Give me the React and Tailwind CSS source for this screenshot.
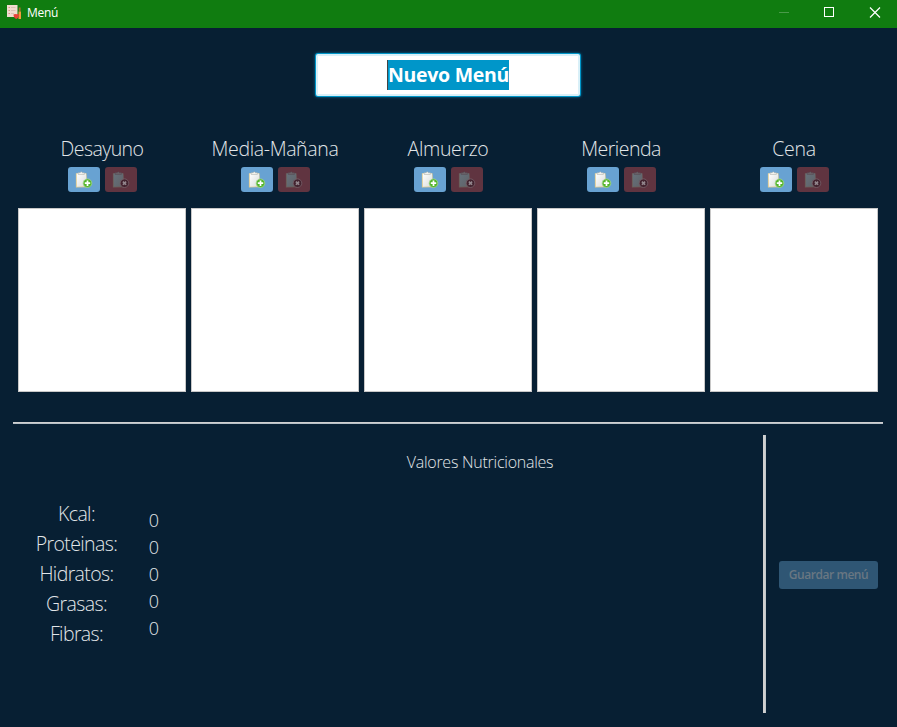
const meals = [
  { name: "Desayuno", tracking: "tracking-[-0.55px]" },
  { name: "Media-Mañana", tracking: "tracking-[-0.35px]" },
  { name: "Almuerzo", tracking: "tracking-[-0.35px]" },
  { name: "Merienda", tracking: "tracking-[-0.5px]" },
  { name: "Cena", tracking: "tracking-[-0.35px]" },
];

const nutrients = ["Kcal:", "Proteinas:", "Hidratos:", "Grasas:", "Fibras:"];

function AppIcon() {
  return (
    <svg width="16" height="16" viewBox="0 0 16 16" aria-hidden="true">
      <path d="M1 0h10.500v12H1z" fill="#f1ddd0" />
      <path d="M2.5 2.500h1.5M2.5 5.500h1.5M2.5 8.500h1.5" stroke="#e0998c" strokeWidth="1.2" />
      <path d="M5 2.500h4.5M5 5.500h4.5M5 8.500h3" stroke="#dcc3b6" />
      <path d="M12.800 2.500h1.800v4h-1.800z" fill="#a8702f" />
      <path d="M12.500 6.500h2.500V14h-2.500z" fill="#f39a3d" />
      <path d="M7.500 9.500q1.500-.8 2.700-.2 1.300-.6 2.800.2 0 3.300-2.800 4.500-2.700-1.200-2.700-4.500z" fill="#e8433a" />
    </svg>
  );
}

function ClipboardIcon({ kind }) {
  const add = kind === "add";
  return (
    <svg width="18" height="18" viewBox="0 0 18 18" aria-hidden="true">
      <defs>
        <linearGradient id={"paper-" + kind} x1="0" y1="0" x2="1" y2="1">
          <stop offset="0" stopColor={add ? "#fff" : "#66717a"} />
          <stop offset="1" stopColor={add ? "#d9dcda" : "#5f6268"} />
        </linearGradient>
      </defs>
      <path d="M.9 2.200h10.600l.5 14-11.100.2z" fill={add ? "#e0cc92" : "#6b5d58"} />
      <path d="M1.700 2.500h9.300l.5 12.800-9.600.4z" fill={"url(#paper-" + kind + ")"} />
      <path d="M3.200 3.500V1.700h1.900Q6.200-.3 7.400 1.700h1.900v1.800z" fill={add ? "#f4f3ee" : "#696167"} stroke={add ? "#a9aaa5" : "#544b55"} strokeWidth=".5" />
      <circle cx="12.500" cy="12.200" r="4.300" fill={add ? "#54b52c" : "#42232f"} stroke={add ? "#a1d58b" : "#79616a"} strokeWidth=".8" />
      {add ? (
        <path d="M12.500 9.500v5.400M9.800 12.200h5.400" stroke="#fff" strokeWidth="1.700" />
      ) : (
        <path d="M10.900 10.600l3.200 3.200M14.100 10.600l-3.200 3.200" stroke="#93868d" strokeWidth="1.600" />
      )}
    </svg>
  );
}

function Meal({ name, tracking }) {
  return (
    <section className="flex w-[168px] flex-col items-center">
      <h2 className={"h-[30px] whitespace-nowrap text-[19.5px] leading-[30px] font-light " + tracking}>{name}</h2>
      <div className="mt-[3px] flex gap-[5px] pl-px">
        <button aria-label="Añadir" className="flex h-[25px] w-8 items-center justify-center rounded-[3px] bg-[#68a2d2]">
          <ClipboardIcon kind="add" />
        </button>
        <button aria-label="Eliminar" disabled className="flex h-[25px] w-8 items-center justify-center rounded-[3px] bg-[#603440]">
          <ClipboardIcon kind="remove" />
        </button>
      </div>
      <div className="mt-4 h-[184px] w-full border border-[#c8c8c8] bg-white" />
    </section>
  );
}

export default function App() {
  return (
    <div className="flex h-[727px] w-[897px] flex-col overflow-hidden bg-[#071f33] font-['Open_Sans','Noto_Sans',sans-serif] text-[#e2e6e9]">
      <header className="flex h-7 shrink-0 items-center bg-[#107c10] text-white">
        <div className="flex flex-1 items-center pb-[3px] pl-[6px]">
          <AppIcon />
          <span className="ml-[5px] pt-px text-[12px] leading-4 tracking-[-0.3px]">Menú</span>
        </div>
        <svg width="120" height="28" viewBox="0 0 120 28" fill="none" shapeRendering="crispEdges" aria-hidden="true">
          <path d="M2 12.5h10" stroke="#4a9a4a" />
          <path d="M47.5 7.5h9v9h-9z" stroke="#fff" />
          <path d="M93 7.5l10 10M103 7.5l-10 10" stroke="#fff" strokeWidth="1.2" shapeRendering="auto" />
        </svg>
      </header>

      <div className="mt-[26px] ml-[316px] flex h-[42px] w-[264px] shrink-0 items-center justify-center rounded-[2px] border-2 border-[#d9f0f8] bg-white shadow-[0_0_0_1px_#0096c9,0_0_3px_1px_#006f98]">
        <span className="flex h-[30px] w-[122px] justify-center border-l border-[#444] bg-[#0096c9] text-[19.5px] leading-[30px] font-bold whitespace-nowrap text-white tracking-[-0.3px]">Nuevo Menú</span>
      </div>

      <main className="mt-[38px] ml-[18px] flex shrink-0 gap-[5px]">
        {meals.map((meal) => (
          <Meal key={meal.name} {...meal} />
        ))}
      </main>

      <div className="mt-[30px] ml-[13px] h-[2px] w-[870px] shrink-0 border-t border-[#cfcfcf] bg-[#b7c0c7]" />

      <div className="mt-[11px] flex h-[278px] shrink-0">
        <section className="w-[763px]">
          <h3 className="mt-[15px] ml-[197px] h-6 text-center text-[16px] leading-6 font-light tracking-[-0.25px]">Valores Nutricionales</h3>
          <div className="mt-[25px] flex">
            <div className="ml-[27px] flex w-[99px] flex-col text-center text-[19.5px] leading-[30px] font-light tracking-[-0.62px]">
              {nutrients.map((label) => (
                <span key={label}>{label}</span>
              ))}
            </div>
            <div className="mt-[8px] ml-[18px] flex w-5 flex-col text-center text-[18px] leading-[27px] font-light">
              {nutrients.map((label) => (
                <span key={label}>0</span>
              ))}
            </div>
          </div>
        </section>
        <div className="w-[3px] border-r border-[#bfc5c9] bg-[#cfcfcf]" />
        <aside className="flex items-center pl-[13px]">
          <button disabled className="mt-[2px] h-7 w-[99px] rounded-[3px] bg-[#2f5674] text-[12px] leading-7 font-semibold whitespace-nowrap text-[#697782] tracking-[-0.45px]">Guardar menú</button>
        </aside>
      </div>
    </div>
  );
}
